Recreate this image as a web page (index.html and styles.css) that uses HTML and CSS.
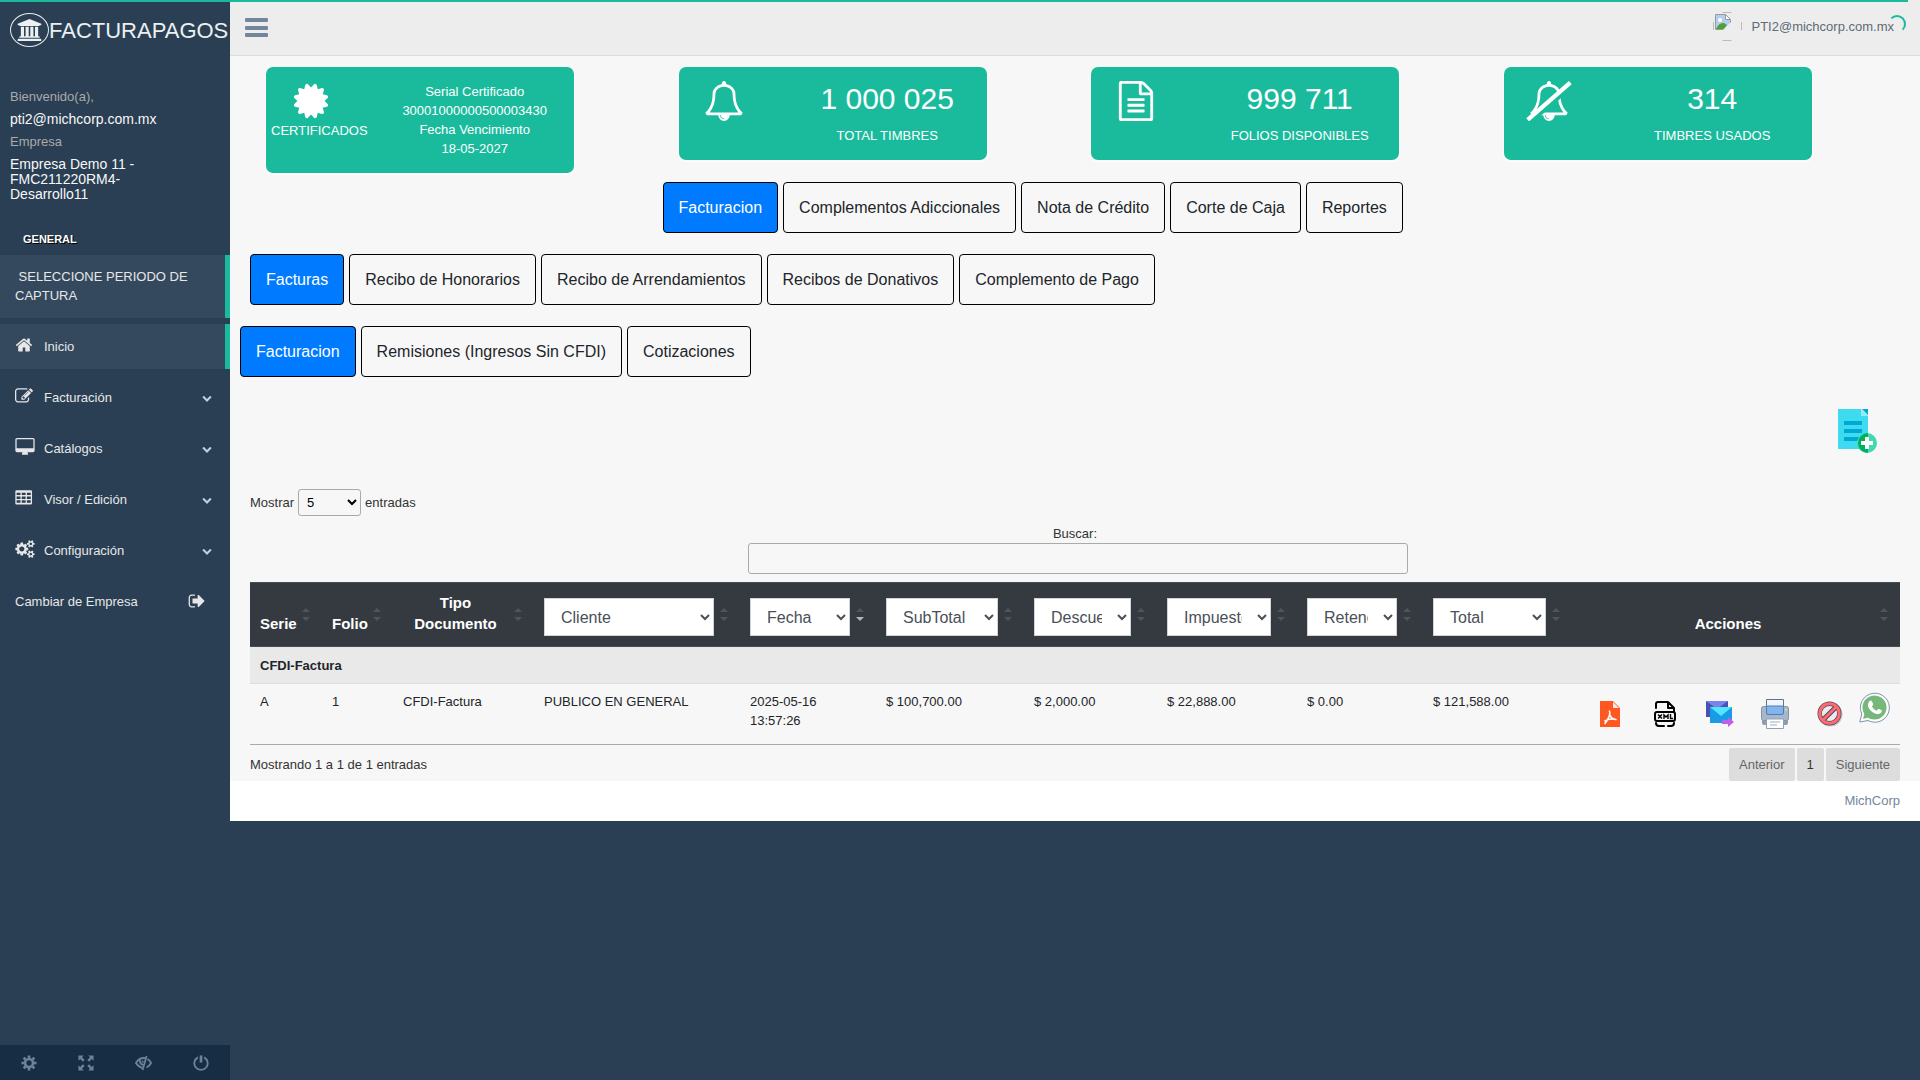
FILE: index.html
```html
<!DOCTYPE html>
<html lang="es">
<head>
    <meta charset="UTF-8">
    <meta name="viewport" content="width=device-width, initial-scale=1.0">
    <title>FacturaPagos</title>
    <link rel="stylesheet" href="styles.css">
</head>
<body>
    <div class="progress"></div>
    <div class="spinner"></div>
    <div class="layout">
        <aside class="sidebar">
            <a href="#" class="site-title">
                <span class="logo">
                    <svg viewBox="-64 0 1920 1792"><path d="M896 0l960 384v128h-128q0 26-20.5 45t-48.5 19h-1526q-28 0-48.5-19t-20.5-45h-128v-128zm-704 640h256v768h128v-768h256v768h128v-768h256v768h128v-768h256v768h59q28 0 48.5 19t20.5 45v64h-1664v-64q0-26 20.5-45t48.5-19h59v-768zm1595 960q28 0 48.5 19t20.5 45v128h-1920v-128q0-26 20.5-45t48.5-19h1782z"/></svg>
                </span>
                <span>FACTURAPAGOS</span>
            </a>
            <div class="profile">
                <span>Bienvenido(a),</span>
                <h2>pti2@michcorp.com.mx</h2>
                <span>Empresa</span>
                <h2>Empresa Demo 11 - FMC211220RM4-Desarrollo11</h2>
            </div>
            <h3 class="menu-title">GENERAL</h3>
            <nav class="menu">
                <a href="#" class="period active">&nbsp;SELECCIONE PERIODO DE CAPTURA</a>
                <a href="#" class="active">
                    <svg class="icon" viewBox="0 0 1792 1792"><path d="M1472 992v480q0 26-19 45t-45 19h-384v-384h-256v384h-384q-26 0-45-19t-19-45v-480q0-1 .5-3t.5-3l575-474 575 474q1 2 1 6zm223-69l-62 74q-8 9-21 11h-3q-13 0-21-7l-692-577-692 577q-12 8-24 7-13-2-21-11l-62-74q-8-10-7-23.5t11-21.5l719-599q32-26 76-26t76 26l244 204v-195q0-14 9-23t23-9h192q14 0 23 9t9 23v408l219 182q10 8 11 21.5t-7 23.5z"/></svg>
                    <span>Inicio</span>
                </a>
                <a href="#">
                    <svg class="icon" viewBox="0 0 1792 1792"><path d="M888 1184l116-116-152-152-116 116v56h96v96h56zm440-720q-16-16-33 1l-350 350q-17 17-1 33t33-1l350-350q17-17 1-33zm80 594v190q0 119-84.5 203.5t-203.5 84.5h-832q-119 0-203.5-84.5t-84.5-203.5v-832q0-119 84.5-203.5t203.5-84.5h832q63 0 117 25 15 7 18 23 3 17-9 29l-49 49q-14 14-32 8-23-6-45-6h-832q-66 0-113 47t-47 113v832q0 66 47 113t113 47h832q66 0 113-47t47-113v-126q0-13 9-22l64-64q15-15 35-7t20 29zm-96-738l288 288-672 672h-288v-288zm444 132l-92 92-288-288 92-92q28-28 68-28t68 28l152 152q28 28 28 68t-28 68z"/></svg>
                    <span>Facturación</span>
                    <svg class="chevron" viewBox="0 0 1792 1792"><path d="M1683 808l-742 741q-19 19-45 19t-45-19l-742-741q-19-19-19-45.500t19-45.500l166-165q19-19 45-19t45 19l531 531 531-531q19-19 45-19t45 19l166 165q19 19 19 45.500t-19 45.500z"/></svg>
                </a>
                <a href="#">
                    <svg class="icon wide" viewBox="-64 0 1920 1792"><path d="M1728 992v-832q0-13-9.500-22.500t-22.500-9.500h-1600q-13 0-22.500 9.500t-9.500 22.500v832q0 13 9.500 22.500t22.500 9.500h1600q13 0 22.500-9.500t9.500-22.500zm128-832v1088q0 66-47 113t-113 47h-544q0 37 16 77.500t32 71 16 43.500q0 26-19 45t-45 19h-512q-26 0-45-19t-19-45q0-14 16-44t32-70 16-78h-544q-66 0-113-47t-47-113v-1088q0-66 47-113t113-47h1600q66 0 113 47t47 113z"/></svg>
                    <span>Catálogos</span>
                    <svg class="chevron" viewBox="0 0 1792 1792"><path d="M1683 808l-742 741q-19 19-45 19t-45-19l-742-741q-19-19-19-45.500t19-45.500l166-165q19-19 45-19t45 19l531 531 531-531q19-19 45-19t45 19l166 165q19 19 19 45.500t-19 45.500z"/></svg>
                </a>
                <a href="#">
                    <svg class="icon" viewBox="0 0 1792 1792"><path fill-rule="evenodd" d="M160 128h1408q128 0 128 128v1152q0 128-128 128h-1408q-128 0-128-128v-1152q0-128 128-128zM160 384v224h384v-224zM672 384v224h384v-224zM1184 384v224h384v-224zM160 736v256h384v-256zM672 736v256h384v-256zM1184 736v256h384v-256zM160 1120v256h384v-256zM672 1120v256h384v-256zM1184 1120v256h384v-256z"/></svg>
                    <span>Visor / Edición</span>
                    <svg class="chevron" viewBox="0 0 1792 1792"><path d="M1683 808l-742 741q-19 19-45 19t-45-19l-742-741q-19-19-19-45.500t19-45.500l166-165q19-19 45-19t45 19l531 531 531-531q19-19 45-19t45 19l166 165q19 19 19 45.500t-19 45.500z"/></svg>
                </a>
                <a href="#">
                    <svg class="icon wide" viewBox="0 0 1920 1792"><path d="M896 896q0-106-75-181t-181-75-181 75-75 181 75 181 181 75 181-75 75-181zm768 512q0-52-38-90t-90-38-90 38-38 90q0 53 37.500 90.500t90.500 37.500 90.500-37.500 37.500-90.500zm0-1024q0-52-38-90t-90-38-90 38-38 90q0 53 37.500 90.500t90.500 37.500 90.500-37.500 37.500-90.500zm-384 421v185q0 10-7 19.500t-16 10.500l-155 24q-11 35-32 76 34 48 90 115 7 11 7 20 0 12-7 19-23 30-82.500 89.500t-78.500 59.500q-11 0-21-7l-115-90q-37 19-77 31-11 108-23 155-7 24-30 24h-186q-11 0-20-7.500t-10-17.500l-23-153q-34-10-75-31l-118 89q-7 7-20 7-11 0-21-8-144-133-144-160 0-9 7-19 10-14 41-53t47-61q-23-44-35-82l-152-24q-10-1-17-9.500t-7-19.500v-185q0-10 7-19.500t16-10.500l155-24q11-35 32-76-34-48-90-115-7-11-7-20 0-12 7-20 22-30 82-89t79-59q11 0 21 7l115 90q34-18 77-32 11-108 23-154 7-24 30-24h186q11 0 20 7.500t10 17.500l23 153q34 10 75 31l118-89q8-7 20-7 11 0 21 8 144 133 144 160 0 9-7 19-12 16-42 54t-45 60q23 48 34 82l152 23q10 2 17 10.500t7 19.500zm640 533v140q0 16-149 31-12 27-30 52 51 113 51 138 0 4-4 7-122 71-124 71-8 0-46-47t-52-68q-20 2-30 2t-30-2q-14 21-52 68t-46 47q-2 0-124-71-4-3-4-7 0-25 51-138-18-25-30-52-149-15-149-31v-140q0-16 149-31 13-29 30-52-51-113-51-138 0-4 4-7 4-2 35-20t59-34 30-16q8 0 46 46.500t52 67.500q20-2 30-2t30 2q51-71 92-112l6-2q4 0 124 70 4 3 4 7 0 25-51 138 17 23 30 52 149 15 149 31zm0-1024v140q0 16-149 31-12 27-30 52 51 113 51 138 0 4-4 7-122 71-124 71-8 0-46-47t-52-68q-20 2-30 2t-30-2q-14 21-52 68t-46 47q-2 0-124-71-4-3-4-7 0-25 51-138-18-25-30-52-149-15-149-31v-140q0-16 149-31 13-29 30-52-51-113-51-138 0-4 4-7 4-2 35-20t59-34 30-16q8 0 46 46.500t52 67.500q20-2 30-2t30 2q51-71 92-112l6-2q4 0 124 70 4 3 4 7 0 25-51 138 17 23 30 52 149 15 149 31z"/></svg>
                    <span>Configuración</span>
                    <svg class="chevron" viewBox="0 0 1792 1792"><path d="M1683 808l-742 741q-19 19-45 19t-45-19l-742-741q-19-19-19-45.500t19-45.500l166-165q19-19 45-19t45 19l531 531 531-531q19-19 45-19t45 19l166 165q19 19 19 45.500t-19 45.500z"/></svg>
                </a>
                <a href="#">
                    <span>Cambiar de Empresa</span>
                    <svg class="icon exit" viewBox="0 0 1792 1792"><path d="M704 1440q0 4 1 20t.5 26.500-3 23.500-10 19.500-20.500 6.500h-320q-119 0-203.500-84.500t-84.500-203.500v-704q0-119 84.500-203.500t203.500-84.500h320q13 0 22.500 9.500t9.500 22.500q0 4 1 20t.5 26.500-3 23.500-10 19.500-20.500 6.500h-320q-66 0-113 47t-47 113v704q0 66 47 113t113 47h312l11.500 1 11.500 3 8 5.500 7 9 2 13.500zm928-544q0 26-19 45l-544 544q-19 19-45 19t-45-19-19-45v-288h-448q-26 0-45-19t-19-45v-384q0-26 19-45t45-19h448v-288q0-26 19-45t45-19 45 19l544 544q19 19 19 45z"/></svg>
                </a>
            </nav>
            <div class="sidebar-footer">
                <a href="#" aria-label="Ajustes">
                    <svg viewBox="0 0 18 18"><circle cx="9" cy="9" r="4.500" fill="none" stroke="currentColor" stroke-width="3"/><path stroke="currentColor" stroke-width="3" d="M9 .5v3M9 14.500v3M.5 9h3M14.500 9h3M3 3l2 2M13 13l2 2M3 15l2-2M13 5l2-2"/></svg>
                </a>
                <a href="#" aria-label="Pantalla completa">
                    <svg viewBox="0 0 18 18"><path d="M.5.5h6l-2 2 3 3-2 2-3-3-2 2zM17.500.5h-6l2 2-3 3 2 2 3-3 2 2zM.5 17.500h6l-2-2 3-3-2-2-3 3-2-2zM17.500 17.500h-6l2-2-3-3 2-2 3 3 2-2z"/></svg>
                </a>
                <a href="#" aria-label="Bloquear">
                    <svg class="eye" viewBox="0 0 20 18"><path fill="none" stroke="currentColor" stroke-width="2" d="M12 3.500Q5.500 2.500 1.500 9q3 4.500 7 5.500M14.500 4.500q2.500 1.500 4 4.500-1.500 3-5 5M13.500 1l-4.500 16M6 6q0 5 4 5M9 6.500v2"/></svg>
                </a>
                <a href="#" aria-label="Salir">
                    <svg viewBox="0 0 18 18"><path fill="none" stroke="currentColor" stroke-width="2" d="M5.500 2.700a7.500 7.500 0 1 0 7 0"/><path d="M7.500.5h3v8h-3z"/></svg>
                </a>
            </div>
        </aside>

        <div class="page">
            <header class="topbar">
                <button class="toggle" aria-label="Menú">
                    <svg viewBox="0 0 23 20"><rect width="23" height="4" rx="1"/><rect y="8" width="23" height="4" rx="1"/><rect y="15" width="23" height="4" rx="1"/></svg>
                </button>
                <a href="#" class="user">
                    <svg class="avatar" viewBox="0 0 29 29">
                        <path fill="none" stroke="#bbb" d="M9.500.500h9M.500 10v8M28.500 10v8M9.500 28.500h9"/>
                        <path fill="#fff" stroke="#999" d="M2.500 2.500h10l5 5v10h-15z"/>
                        <path fill="#b5cdf5" d="M3 3h9v5h5v9h-14z"/>
                        <circle cx="7" cy="8" r="2" fill="#fff"/>
                        <path fill="#4ca32e" d="M3 17q3-7 8-6l3 2-3 4z"/>
                        <path fill="#ededed" d="M18 10v8h-8z"/>
                        <path fill="#fff" stroke="#999" d="M12.500 2.500v5h5z"/>
                    </svg>
                    <span>PTI2@michcorp.com.mx</span>
                </a>
            </header>

            <main class="content">
                <section class="cards">
                    <div class="card">
                        <div class="card-icon">
                            <svg viewBox="0 0 1792 1792"><path d="M1504 896l138 135q30 28 20 70-12 41-52 51l-188 48 53 186q12 41-19 70-29 31-70 19l-186-53-48 188q-10 40-51 52-12 2-19 2-31 0-51-22l-135-138-135 138q-28 30-70 20-41-11-51-52l-48-188-186 53q-41 12-70-19-31-29-19-70l53-186-188-48q-40-10-52-51-10-42 20-70l138-135-138-135q-30-28-20-70 12-41 52-51l188-48-53-186q-12-41 19-70 29-31 70-19l186 53 48-188q10-41 51-51 41-12 70 19l135 139 135-139q29-30 70-19 41 10 51 51l48 188 186-53q41-12 70 19 31 29 19 70l-53 186 188 48q40 10 52 51 10 42-20 70z"/></svg>
                            <span class="card-caption">CERTIFICADOS</span>
                        </div>
                        <p class="card-lines">Serial Certificado<br>30001000000500003430<br>Fecha Vencimiento<br>18-05-2027</p>
                    </div>
                    <div class="card">
                        <div class="card-icon">
                            <svg viewBox="0 0 1792 1792"><path d="M912 1696q0-16-16-16-59 0-101.500-42.500t-42.500-101.500q0-16-16-16t-16 16q0 73 51.500 124.500t124.500 51.500q16 0 16-16zm-666-288h1300q-266-300-266-832 0-51-24-105t-69-103-121.500-80.500-169.500-31.500-169.500 31.500-121.500 80.500-69 103-24 105q0 532-266 832zm1482 0q0 52-38 90t-90 38h-448q0 106-75 181t-181 75-181-75-75-181h-448q-52 0-90-38t-38-90q50-42 91-88t85-119.500 74.500-158.500 50-206 19.500-260q0-152 117-282.500t307-158.500q-8-19-8-39 0-40 28-68t68-28 68 28 28 68q0 20-8 39 190 28 307 158.500t117 282.500q0 139 19.500 260t50 206 74.500 158.500 85 119.500 91 88z"/></svg>
                        </div>
                        <div class="card-info">
                            <p class="count">1 000 025</p>
                            <p>TOTAL TIMBRES</p>
                        </div>
                    </div>
                    <div class="card">
                        <div class="card-icon">
                            <svg viewBox="0 0 1792 1792"><path d="M1596 380q28 28 48 76t20 88v1152q0 40-28 68t-68 28h-1344q-40 0-68-28t-28-68v-1600q0-40 28-68t68-28h896q40 0 88 20t76 48zm-444-244v376h376q-10-29-22-41l-313-313q-12-12-41-22zm384 1528v-1024h-416q-40 0-68-28t-28-68v-416h-768v1536h1280zm-1024-864q0-14 9-23t23-9h704q14 0 23 9t9 23v64q0 14-9 23t-23 9h-704q-14 0-23-9t-9-23v-64zm736 224q14 0 23 9t9 23v64q0 14-9 23t-23 9h-704q-14 0-23-9t-9-23v-64q0-14 9-23t23-9h704zm0 256q14 0 23 9t9 23v64q0 14-9 23t-23 9h-704q-14 0-23-9t-9-23v-64q0-14 9-23t23-9h704z"/></svg>
                        </div>
                        <div class="card-info">
                            <p class="count">999 711</p>
                            <p>FOLIOS DISPONIBLES</p>
                        </div>
                    </div>
                    <div class="card">
                        <div class="card-icon">
                            <svg class="slash" viewBox="-128 0 2048 1792">
                                <path d="M912 1696q0-16-16-16-59 0-101.500-42.500t-42.500-101.500q0-16-16-16t-16 16q0 73 51.500 124.500t124.500 51.500q16 0 16-16zm-666-288h1300q-266-300-266-832 0-51-24-105t-69-103-121.500-80.500-169.500-31.500-169.500 31.500-121.500 80.500-69 103-24 105q0 532-266 832zm1482 0q0 52-38 90t-90 38h-448q0 106-75 181t-181 75-181-75-75-181h-448q-52 0-90-38t-38-90q50-42 91-88t85-119.500 74.500-158.500 50-206 19.500-260q0-152 117-282.500t307-158.500q-8-19-8-39 0-40 28-68t68-28 68 28 28 68q0 20-8 39 190 28 307 158.500t117 282.500q0 139 19.500 260t50 206 74.500 158.500 85 119.500 91 88z"/>
                                <path fill="none" stroke="#1abb9c" stroke-width="190" d="M40 1860L1960 180"/>
                                <path stroke="#fff" stroke-width="190" d="M-60 1740L1850 70"/>
                            </svg>
                        </div>
                        <div class="card-info">
                            <p class="count">314</p>
                            <p>TIMBRES USADOS</p>
                        </div>
                    </div>
                </section>

                <div class="tabs tabs-main">
                    <button class="tab selected">Facturacion</button>
                    <button class="tab">Complementos Adiccionales</button>
                    <button class="tab">Nota de Crédito</button>
                    <button class="tab">Corte de Caja</button>
                    <button class="tab">Reportes</button>
                </div>
                <div class="tabs">
                    <button class="tab selected">Facturas</button>
                    <button class="tab">Recibo de Honorarios</button>
                    <button class="tab">Recibo de Arrendamientos</button>
                    <button class="tab">Recibos de Donativos</button>
                    <button class="tab">Complemento de Pago</button>
                </div>
                <div class="tabs tabs-outer">
                    <button class="tab selected">Facturacion</button>
                    <button class="tab">Remisiones (Ingresos Sin CFDI)</button>
                    <button class="tab">Cotizaciones</button>
                </div>

                <div class="new-row">
                    <button class="icon-button" aria-label="Nueva factura">
                        <svg width="39" height="44" viewBox="0 0 39 44">
                            <path fill="#3edbf0" d="M0 0h23l7 7v33h-30z"/>
                            <path fill="#8deef7" d="M23 0v7h7z"/>
                            <path fill="#00a9d4" d="M24 0h6v6zM6 12h18v4h-18zM6 20h18v4h-18zM6 28h16l-3 4h-13z"/>
                            <circle cx="29" cy="34" r="10" fill="#40d9b0"/>
                            <path fill="#00b060" d="M30 24a10 10 0 0 0 0 20z"/>
                            <path fill="#fff" d="M27 28h4v4h4v4h-4v4h-4v-4h-4v-4h4z"/>
                        </svg>
                    </button>
                </div>

                <label class="length">Mostrar
                    <select>
                        <option>5</option>
                        <option>10</option>
                        <option>25</option>
                    </select>
                    entradas
                </label>
                <div class="search">
                    <label for="search">Buscar:</label>
                    <input type="search" id="search">
                </div>

                <table class="invoices">
                    <colgroup>
                        <col class="col-serie">
                        <col class="col-folio">
                        <col class="col-tipo">
                        <col class="col-cliente">
                        <col class="col-fecha">
                        <col class="col-subtotal">
                        <col class="col-descuento">
                        <col class="col-impuesto">
                        <col class="col-retencion">
                        <col class="col-total">
                        <col class="col-acciones">
                    </colgroup>
                    <thead>
                        <tr>
                            <th>Serie</th>
                            <th>Folio</th>
                            <th>Tipo Documento</th>
                            <th class="filter"><select aria-label="Cliente"><option>Cliente</option></select></th>
                            <th class="filter sorted"><select aria-label="Fecha"><option>Fecha</option></select></th>
                            <th class="filter"><select aria-label="SubTotal"><option>SubTotal</option></select></th>
                            <th class="filter"><select aria-label="Descuento"><option>Descuento</option></select></th>
                            <th class="filter"><select aria-label="Impuestos"><option>Impuestos</option></select></th>
                            <th class="filter"><select aria-label="Retenciones"><option>Retenciones</option></select></th>
                            <th class="filter"><select aria-label="Total"><option>Total</option></select></th>
                            <th>Acciones</th>
                        </tr>
                    </thead>
                    <tbody>
                        <tr class="group">
                            <td colspan="11">CFDI-Factura</td>
                        </tr>
                        <tr>
                            <td>A</td>
                            <td>1</td>
                            <td>CFDI-Factura</td>
                            <td>PUBLICO EN GENERAL</td>
                            <td>2025-05-16 13:57:26</td>
                            <td>$ 100,700.00</td>
                            <td>$ 2,000.00</td>
                            <td>$ 22,888.00</td>
                            <td>$ 0.00</td>
                            <td>$ 121,588.00</td>
                            <td>
                                <div class="actions">
                                    <button class="icon-button" aria-label="PDF">
                                        <svg width="20" height="26" viewBox="0 0 20 26">
                                            <path fill="#ff5722" d="M0 0h13l7 7v19h-20z"/>
                                            <path fill="#fbe9e7" d="M13 1v6h6z"/>
                                            <path fill="none" stroke="#fff" stroke-width="1.600" stroke-linecap="round" d="M9.500 10q1.800 4-4.500 12.500M10 14q1 4 6 4.500M5 20q4-3 11-1.500"/>
                                        </svg>
                                    </button>
                                    <button class="icon-button" aria-label="XML">
                                        <svg width="22" height="26" viewBox="0 0 22 26">
                                            <path fill="none" stroke="#000" stroke-width="2" stroke-linecap="round" stroke-linejoin="round" d="M2 7V3q0-2 2-2h10l6 6v4M14 1v6h6M3 11h16q2 0 2 2v5q0 2-2 2H3q-2 0-2-2v-5q0-2 2-2zM2 22q0 3 3 3h5M14 25h3q3 0 3-3"/>
                                            <path fill="none" stroke="#000" stroke-width="1.400" d="M4 13.500l4 4M8 13.500l-4 4M10 18v-4l2 2 2-2v4M16.500 13v4.500h2.500"/>
                                        </svg>
                                    </button>
                                    <button class="icon-button" aria-label="Enviar correo">
                                        <svg width="28" height="26" viewBox="0 0 28 26">
                                            <path fill="#4b50b5" d="M0 0h22v16h-22z"/>
                                            <path fill="#7b83eb" d="M0 0h22l-11 8z"/>
                                            <path fill="#1a9be6" d="M4 6h22v16h-22z"/>
                                            <path fill="#50e6ff" d="M4 6h22l-11 9z"/>
                                            <path fill="#c060e8" d="M16 19h6v-3l6 5-6 5v-3h-6z"/>
                                        </svg>
                                    </button>
                                    <button class="icon-button" aria-label="Imprimir">
                                        <svg width="28" height="30" viewBox="0 0 28 30">
                                            <rect x="1" y="10" width="26" height="16" rx="2" fill="#8d9cae"/>
                                            <rect x=".5" y="7.500" width="27" height="14" rx="2" fill="#a6b7ca" stroke="#8395a8"/>
                                            <path fill="#f2f6fa" stroke="#5f7488" d="M5.500.500h17v8h-17z"/>
                                            <rect x="5.500" y="7" width="17" height="8.500" rx="1.500" fill="#84b4ee" stroke="#4d7cb8"/>
                                            <path fill="#fff" stroke="#91a1b2" d="M5.500 20h17v9.500h-17z"/>
                                            <path stroke="#9eafc0" d="M9 23h10M9 26h7"/>
                                            <circle cx="25" cy="11" r="1" fill="#e8e070"/>
                                        </svg>
                                    </button>
                                    <button class="icon-button" aria-label="Cancelar">
                                        <svg width="26" height="26" viewBox="0 0 26 26">
                                            <circle cx="13.500" cy="13.500" r="12" fill="#c9c9cf"/>
                                            <circle cx="12.500" cy="12.500" r="12" fill="#4c4668"/>
                                            <circle cx="12.500" cy="12.500" r="9.800" fill="none" stroke="#ff6b6b" stroke-width="3"/>
                                            <circle cx="12.500" cy="12.500" r="7.600" fill="#ecebf0"/>
                                            <path stroke="#4c4668" stroke-width="5" d="M18 7L7 18"/>
                                            <path stroke="#ff6b6b" stroke-width="3" d="M19 6L6 19"/>
                                        </svg>
                                    </button>
                                    <button class="icon-button whatsapp" aria-label="WhatsApp">
                                        <svg width="31" height="31" viewBox="0 0 31 31">
                                            <path fill="#fff" stroke="#7d93a8" d="M.800 30l2-8A14.500 14.500 0 1 1 9 28.500z"/>
                                            <circle cx="15.500" cy="15.500" r="12" fill="#76b87a"/>
                                            <path fill="#76b87a" d="M4 27l2-7 5 5z"/>
                                            <path fill="#fff" d="M10.500 9q1.500-1 2.500.500l1.200 2.700q.200 1-1.300 2.300 1.500 3 4.600 4.300l1.700-1.800q.600-.400 3.300 1.300.800 1-.400 2.500-2.300 2.200-6 .700-5.500-2.500-7.100-7.300-.500-3.200 1.500-5.200z"/>
                                        </svg>
                                    </button>
                                </div>
                            </td>
                        </tr>
                    </tbody>
                </table>

                <div class="table-footer">
                    <span>Mostrando 1 a 1 de 1 entradas</span>
                    <div class="pagination">
                        <button>Anterior</button>
                        <button class="current">1</button>
                        <button>Siguiente</button>
                    </div>
                </div>
            </main>

            <footer class="footer"><a href="#">MichCorp</a></footer>
        </div>
    </div>
</body>
</html>
```
FILE: styles.css
```css
* {
    box-sizing: border-box;
}
body {
    margin: 0;
    background: #2a3f54;
    color: #212529;
    font-family: "Liberation Sans", Arial, sans-serif;
    font-size: 13px;
    line-height: 19px;
}
h2, h3, p {
    margin: 0;
    font-weight: normal;
}
a {
    color: inherit;
    text-decoration: none;
}
button, select, input {
    font-family: inherit;
}
svg {
    display: block;
    fill: currentColor;
    flex-shrink: 0;
}
.progress {
    position: fixed;
    top: 0;
    left: 0;
    right: 12px;
    height: 2px;
    background: #1abb9c;
    z-index: 10;
}
.spinner {
    position: fixed;
    top: 15px;
    right: 14px;
    width: 18px;
    height: 18px;
    border: 2px solid transparent;
    border-top-color: #1abb9c;
    border-right-color: #1abb9c;
    border-radius: 50%;
    z-index: 10;
}
.layout {
    display: flex;
    align-items: flex-start;
}

/* Sidebar */
.sidebar {
    display: flex;
    flex-direction: column;
    flex-shrink: 0;
    width: 230px;
    min-height: 100vh;
    color: #e7e7e7;
}
.site-title {
    display: flex;
    align-items: center;
    height: 60px;
    padding-left: 10px;
    color: #ecf0f1;
    font-size: 22px;
    overflow: hidden;
}
.logo {
    display: flex;
    align-items: center;
    justify-content: center;
    flex-shrink: 0;
    width: 39px;
    height: 34px;
    border: 1px solid #eaeaea;
    border-radius: 50%;
}
.logo svg {
    width: 25px;
    height: 22px;
}
.profile {
    padding: 27px 60px 0 10px;
}
.profile span {
    display: block;
    color: #a9aaab;
}
.profile h2 {
    margin: 6px 0 5px;
    color: #f7f7f7;
    font-size: 14px;
    line-height: 15px;
}
.menu-title {
    margin-top: 18px;
    padding: 5px 23px 6px;
    color: #fff;
    font-size: 11px;
    font-weight: bold;
    text-shadow: 1px 1px #000;
}
.menu {
    display: flex;
    flex-direction: column;
    gap: 6px;
}
.menu a {
    display: flex;
    align-items: center;
    gap: 9px;
    height: 45px;
    padding: 0 18px 0 15px;
}
.menu a.period {
    display: block;
    height: auto;
    padding: 12px 15px 13px;
}
.menu a.active {
    background: #34495e;
    border-right: 5px solid #1abb9c;
}
.icon {
    width: 18px;
    height: 18px;
    margin: 0 2px 4px 0;
}
.icon.wide {
    width: 20px;
    margin-right: 0;
}
.icon.exit {
    margin: 0 6px 2px auto;
}
.chevron {
    width: 10px;
    height: 10px;
    margin-left: auto;
    color: #c4cfda;
}
.sidebar-footer {
    display: grid;
    grid-template-columns: repeat(4, 1fr);
    margin-top: auto;
    background: #172d44;
    color: #6c8299;
}
.sidebar-footer a {
    display: flex;
    justify-content: center;
    padding: 10px 0 9px;
}
.sidebar-footer svg {
    width: 16px;
    height: 16px;
}
.sidebar-footer .eye {
    width: 19px;
}

/* Top bar */
.page {
    flex: 1;
    min-width: 0;
}
.topbar {
    display: flex;
    align-items: center;
    justify-content: space-between;
    height: 56px;
    padding: 0 26px 0 15px;
    background: #ededed;
    border-bottom: 1px solid #d9dee4;
}
.toggle {
    padding: 0;
    border: 0;
    background: none;
    color: #73879c;
}
.toggle svg {
    width: 23px;
    height: 20px;
}
.user {
    display: flex;
    align-items: center;
    gap: 10px;
    padding-bottom: 2px;
    color: #5f6a75;
}
.avatar {
    width: 29px;
    height: 29px;
}

/* Content */
.content {
    padding: 11px 20px 0;
    background: #f7f7f7;
}
.cards {
    display: grid;
    grid-template-columns: repeat(4, 1fr);
    align-items: start;
    margin-bottom: 9px;
}
.card {
    display: grid;
    grid-template-columns: 90px 1fr;
    gap: 19px;
    width: calc(75% - 1px);
    margin-left: 16px;
    padding: 14px 0 15px;
    border-radius: 7px;
    background: #1abb9c;
    box-shadow: 0 1px 1px 1px #fff;
    color: #fff;
    text-align: center;
}
.card-icon {
    display: flex;
    flex-direction: column;
    align-items: center;
}
.card-icon svg {
    width: 40px;
    height: 40px;
}
.card-icon .slash {
    width: 46px;
}
.card-caption {
    align-self: flex-start;
    padding-left: 5px;
}
.card-lines {
    padding-top: 1px;
}
.count {
    margin-bottom: 10px;
    font-size: 30px;
    line-height: 35px;
}
.tabs {
    display: flex;
    gap: 5px;
    margin-bottom: 21px;
}
.tabs-main {
    margin-left: 25%;
}
.tabs-outer {
    margin-left: -10px;
}
.tab {
    padding: 12px 15px;
    border: 1px solid #000;
    border-radius: 4px;
    background: none;
    color: #212529;
    font-size: 16px;
    line-height: 25px;
    white-space: nowrap;
    cursor: pointer;
}
.tab.selected {
    background: #007bff;
    color: #fff;
}
.new-row {
    display: flex;
    justify-content: flex-end;
    padding: 11px 23px 36px 0;
}
.icon-button {
    padding: 0;
    border: 0;
    background: none;
    cursor: pointer;
}

/* Table controls */
.length {
    display: flex;
    align-items: center;
    gap: 4px;
    color: #333;
}
.length select {
    width: 63px;
    height: 27px;
    padding: 4px;
    border: 1px solid #aaa;
    border-radius: 3px;
    background: transparent;
    font-size: 13px;
}
.search {
    display: flex;
    flex-direction: column;
    align-items: center;
    margin: 8px 0;
    color: #333;
}
.search input {
    width: 40%;
    height: 31px;
    margin: 0 0 0 6px;
    border: 1px solid #aaa;
    border-radius: 3px;
    background: transparent;
}

/* Table */
.invoices {
    width: 100%;
    table-layout: fixed;
    border-collapse: separate;
    border-spacing: 0;
    border-bottom: 1px solid #aaa;
}
.col-serie {
    width: 72px;
}
.col-folio {
    width: 71px;
}
.col-tipo {
    width: 141px;
}
.col-cliente {
    width: 206px;
}
.col-fecha {
    width: 136px;
}
.col-subtotal {
    width: 148px;
}
.col-descuento {
    width: 133px;
}
.col-impuesto {
    width: 140px;
}
.col-retencion {
    width: 126px;
}
.col-total {
    width: 149px;
}
.invoices th {
    position: relative;
    padding: 9px 26px 12px 10px;
    border-top: 1px solid #454d55;
    border-bottom: 1px solid #454d55;
    background: #343a40;
    color: #fff;
    font-size: 15px;
    line-height: 21px;
    vertical-align: bottom;
}
.invoices th.filter {
    padding-bottom: 10px;
}
.invoices th::before,
.invoices th::after {
    content: "";
    position: absolute;
    right: 12px;
    border: 4px solid transparent;
}
.invoices th::before {
    bottom: 50%;
    margin-bottom: 3px;
    border-top-width: 0;
    border-bottom-color: #4d545b;
}
.invoices th::after {
    top: 50%;
    margin-top: 2px;
    border-bottom-width: 0;
    border-top-color: #4d545b;
}
.invoices th.sorted::after {
    border-top-color: #b5b8bb;
}
.invoices th select {
    display: block;
    width: 100%;
    height: 38px;
    padding: 6px 12px;
    border: 1px solid #ced4da;
    border-radius: 0;
    background: #fff;
    color: #495057;
    font-size: 16px;
}
.invoices td {
    padding: 8px 10px;
    vertical-align: top;
}
.invoices .group td {
    padding: 9px 10px 8px;
    border-bottom: 1px solid #ddd;
    background: #e9e9e9;
    font-weight: bold;
}
.actions {
    display: grid;
    grid-template-columns: repeat(5, 1fr) 32px;
    align-items: start;
    min-height: 44px;
}
.actions .icon-button {
    display: flex;
    align-items: center;
    justify-content: center;
    height: 30px;
    margin-top: 7px;
}
.actions .whatsapp {
    margin-top: 0;
}
.table-footer {
    display: flex;
    align-items: center;
    justify-content: space-between;
    padding-top: 3px;
    color: #333;
}
.pagination {
    display: flex;
    gap: 2px;
}
.pagination button {
    padding: 7px 10px;
    border: 0;
    border-radius: 2px;
    background: #ddd;
    color: #666;
    font-size: 13px;
    line-height: 19px;
}
.pagination .current {
    color: #333;
}
.footer {
    padding: 10px 20px 11px;
    background: #fff;
    color: #73879c;
    text-align: right;
}
```
